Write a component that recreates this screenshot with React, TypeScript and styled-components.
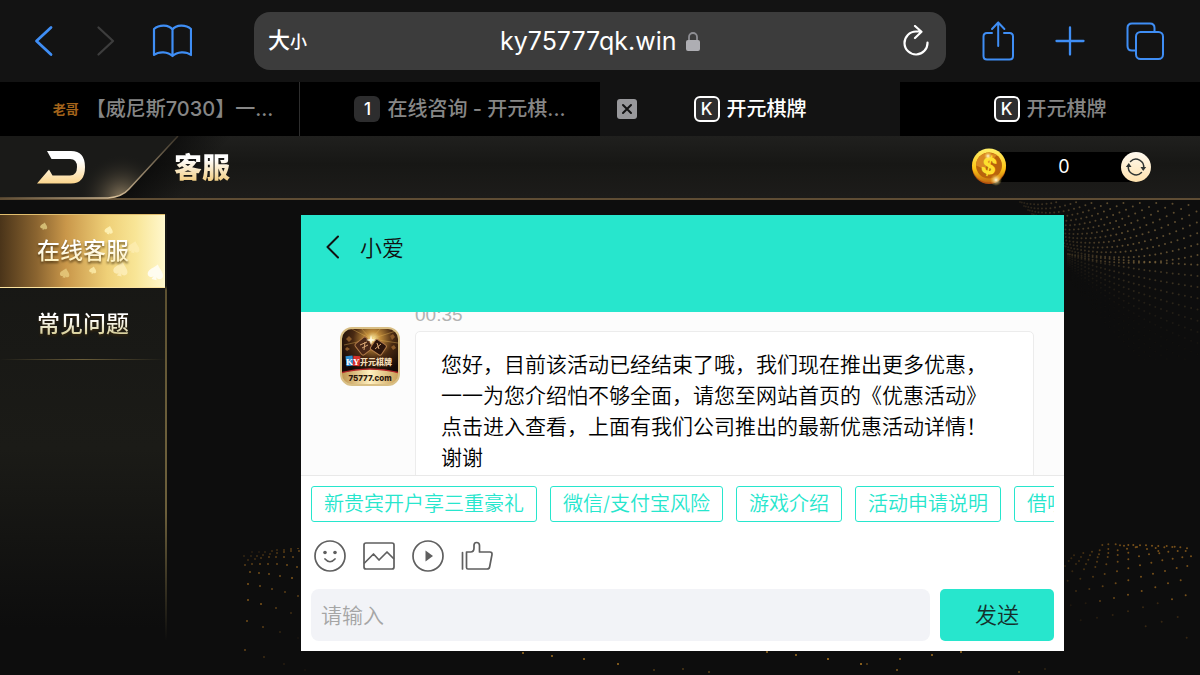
import React from 'react';
import styled, { createGlobalStyle, css } from 'styled-components';

const color = {
  bar: '#131313',
  link: '#3f8ef5',
  field: '#3c3c3c',
  page: '#0d0d0d',
  teal: '#27e6cd',
  line: '#e9e9e9',
};

const GlobalStyle = createGlobalStyle`
  *, *::before, *::after { box-sizing: border-box; }
  body {
    margin: 0;
    background: ${color.page};
    font-family: Inter, "Noto Sans CJK SC", sans-serif;
    color: #fff;
  }
  button, input { font-family: inherit; margin: 0; }
  button { padding: 0; border: 0; background: none; color: inherit; cursor: pointer; }
  svg { display: block; }
`;

const Page = styled.div`
  min-height: 100vh;
  display: flex;
  flex-direction: column;
`;

/* ---------- browser chrome ---------- */

const Toolbar = styled.header`
  display: flex;
  align-items: center;
  height: 82px;
  padding: 0 30px 0 24px;
  background: ${color.bar};
`;

const ToolGroup = styled.nav<{ $gap: number }>`
  display: flex;
  align-items: center;
  gap: ${(p) => p.$gap}px;
`;

const ToolButton = styled.button<{ $wide?: boolean; $dim?: boolean }>`
  display: flex;
  align-items: center;
  justify-content: center;
  width: ${(p) => (p.$wide ? 48 : 40)}px;
  height: 48px;
  color: ${(p) => (p.$dim ? '#3d3d3d' : color.link)};
`;

const AddressBar = styled.div`
  flex: 1;
  display: flex;
  align-items: center;
  justify-content: space-between;
  height: 58px;
  margin: 0 32px 0 58px;
  padding: 0 16px 0 14px;
  border-radius: 16px;
  background: ${color.field};
`;

const TextSizeButton = styled.button`
  width: 60px;
  text-align: left;
  font-size: 22px;
  font-weight: 500;
  line-height: 30px;
  small { font-size: 17px; }
`;

const Address = styled.label`
  display: flex;
  align-items: center;
  gap: 9px;
`;

const AddressInput = styled.input`
  width: 178px;
  padding: 0;
  border: 0;
  outline: 0;
  background: none;
  color: #fff;
  font-size: 25px;
  line-height: 32px;
  text-align: right;
`;

const ReloadButton = styled.button`
  display: flex;
  justify-content: flex-end;
  width: 60px;
`;

const TabStrip = styled.nav`
  display: grid;
  grid-template-columns: repeat(4, 1fr);
  height: 54px;
  background: #000;
`;

const Tab = styled.div<{ $active?: boolean; $divider?: boolean; $long?: boolean }>`
  position: relative;
  display: flex;
  align-items: center;
  justify-content: center;
  padding-left: ${(p) => (p.$long ? 20 : 0)}px;
  border-right: ${(p) => (p.$divider ? '1px solid #2e2e2e' : '0')};
  background: ${(p) => (p.$active ? color.bar : '#000')};
  color: ${(p) => (p.$active ? '#fff' : '#868686')};
`;

const TabLink = styled.a`
  display: flex;
  align-items: center;
  gap: 7px;
  color: inherit;
  text-decoration: none;
  font-size: 20px;
  font-weight: 500;
  line-height: 28px;
  white-space: nowrap;
`;

const LetterIcon = styled.span<{ $framed?: boolean }>`
  display: flex;
  align-items: center;
  justify-content: center;
  width: 26px;
  height: 26px;
  border: ${(p) => (p.$framed ? '2px solid #fff' : '0')};
  border-radius: 6px;
  background: #2d2d2e;
  color: #fff;
  font-size: 17px;
  line-height: 20px;
`;

const GoldIcon = styled.span`
  width: 33px;
  color: #a3631a;
  font-size: 13px;
  font-weight: 700;
  line-height: 16px;
  text-align: right;
`;

const CloseTab = styled.button`
  position: absolute;
  left: 17px;
  top: 17px;
  display: flex;
  align-items: center;
  justify-content: center;
  width: 20px;
  height: 20px;
  border-radius: 3px;
  background: #98989b;
  color: #131313;
`;

/* ---------- game header ---------- */

const GameHeader = styled.header`
  position: relative;
  display: flex;
  align-items: center;
  height: 64px;
  padding: 0 49px 0 36px;
  border-bottom: 2px solid #5f4d34;
  background: linear-gradient(#20201e, #171715 45%, #1d1c1a);
`;

const HeaderShape = styled.svg`
  position: absolute;
  left: 0;
  bottom: -2px;
`;

const ExitButton = styled.button`
  position: relative;
  width: 50px;
`;

const GameTitle = styled.h1`
  position: relative;
  flex: 1;
  margin: 0 0 0 88px;
  padding-top: 2px;
  font-size: 28px;
  font-weight: 900;
  line-height: 36px;
  color: transparent;
  background: linear-gradient(#fff 30%, #f2cf86 85%);
  background-clip: text;
  -webkit-background-clip: text;
`;

const Wallet = styled.div`
  display: flex;
  align-items: center;
`;

const Balance = styled.output`
  width: 138px;
  height: 30px;
  margin: 0 -16px 0 -10px;
  padding-right: 8px;
  background: #000;
  font-size: 18px;
  line-height: 29px;
  text-align: center;
`;

const Coin = styled.svg`
  position: relative;
`;

const RefreshButton = styled.button`
  position: relative;
  display: flex;
  align-items: center;
  justify-content: center;
  width: 30px;
  height: 30px;
  border-radius: 50%;
  background: linear-gradient(#fffaf0, #ffe2ae);
  color: #2f3433;
`;

/* ---------- game body ---------- */

const GameBody = styled.div`
  position: relative;
  flex: 1;
  display: flex;
  align-items: flex-start;
  overflow: hidden;
`;

const Backdrop = styled.svg<{ $corner: 'tr' | 'bl' | 'br' | 'b' }>`
  position: absolute;
  ${(p) => p.$corner === 'tr' && css`top: 0; right: 0;`}
  ${(p) => p.$corner === 'bl' && css`bottom: 0; left: 240px;`}
  ${(p) => p.$corner === 'b' && css`bottom: 0; left: 500px;`}
  ${(p) => p.$corner === 'br' && css`bottom: 0; right: 0;`}
`;

const Sidebar = styled.nav`
  position: relative;
  flex: none;
  width: 167px;
  height: 426px;
  margin-top: 14px;
  border-right: 2px solid;
  border-image: linear-gradient(transparent 17%, #5c5030 18%, #6b5e3a 50%, #6b5e3a 70%, transparent) 1;
  background: linear-gradient(#161614, #1b1b17 55%, ${color.page} 97%);
`;

const SideItem = styled.a<{ $active?: boolean }>`
  position: relative;
  display: flex;
  align-items: center;
  height: ${(p) => (p.$active ? 74 : 72)}px;
  padding-left: 37px;
  border-bottom: 1px solid transparent;
  text-decoration: none;
  ${(p) =>
    p.$active
      ? css`
          border-top: 1px solid #e0bd6e;
          border-bottom-color: #fbe3a0;
          background: linear-gradient(90deg, #4a3419, #8a6430 22%, #c9974a 40%, #efd078 65%, #f8e596 82%, #fff8cd);
        `
      : css`
          border-image: linear-gradient(90deg, transparent, #6b5e3a 50%, transparent) 1;
        `}
`;

const SideText = styled.span<{ $active?: boolean }>`
  position: relative;
  font-size: 23px;
  font-weight: 500;
  line-height: 32px;
  color: transparent;
  background: linear-gradient(#fff 35%, ${(p) => (p.$active ? '#fdf0c0' : '#d9d09c')} 80%);
  background-clip: text;
  -webkit-background-clip: text;
  filter: drop-shadow(0 2px 1px rgba(60, 40, 10, 0.7));
`;

const Spades = styled.svg`
  position: absolute;
  right: 0;
  top: 0;
`;

const Main = styled.main`
  position: relative;
  flex: 1;
  min-width: 0;
  padding: 15px 136px 24px 134px;
`;

/* ---------- chat ---------- */

const Chat = styled.section`
  overflow: hidden;
  background: #fff;
  color: #111;
`;

const ChatHeader = styled.header`
  display: flex;
  align-items: flex-start;
  height: 97px;
  padding: 17px 24px;
  background: ${color.teal};
`;

const BackButton = styled.button`
  display: flex;
  align-items: center;
  width: 35px;
  height: 30px;
`;

const ChatTitle = styled.h2`
  margin: 0;
  font-size: 22px;
  font-weight: 350;
  line-height: 32px;
`;

const Messages = styled.div`
  height: 163px;
  overflow: hidden;
  background: #fcfcfc;
`;

const Message = styled.article`
  display: grid;
  grid-template-columns: 60px 1fr;
  column-gap: 15px;
  margin: -10px 30px 0 39px;
`;

const Time = styled.time`
  grid-column: 2;
  font-family: "Liberation Sans", sans-serif;
  font-size: 19px;
  line-height: 26px;
  color: #b2b2b2;
`;

const Avatar = styled.svg`
  margin-top: -1px;
`;

const Bubble = styled.p`
  margin: 3px 0 0;
  padding: 17px 44px 17px 25px;
  border: 1px solid #ececec;
  border-radius: 5px;
  background: #fff;
  font-size: 21px;
  font-weight: 350;
  line-height: 31px;
  color: #000;
`;

const Composer = styled.form`
  padding: 10px;
  border-top: 1px solid ${color.line};
`;

const QuickReplies = styled.div`
  display: flex;
  gap: 13px;
  overflow: hidden;
`;

const QuickReply = styled.button`
  flex: none;
  height: 36px;
  padding: 0 12px;
  border: 1px solid ${color.teal};
  border-radius: 3px;
  color: ${color.teal};
  font-size: 20px;
  font-weight: 350;
  line-height: 32px;
`;

const Actions = styled.div`
  display: flex;
  gap: 17px;
  padding: 18px 3px 17px;
  color: #5f5f5f;
`;

const InputRow = styled.div`
  display: flex;
  gap: 10px;
  height: 52px;
`;

const MessageInput = styled.input`
  flex: 1;
  min-width: 0;
  padding: 0 10px;
  border: 0;
  border-radius: 8px;
  outline: 0;
  background: #f2f3f7;
  color: #111;
  font-size: 21px;
  font-weight: 350;
  &::placeholder { color: #a5a5a5; opacity: 1; }
`;

const SendButton = styled.button`
  width: 114px;
  padding-bottom: 4px;
  border-radius: 5px;
  background: ${color.teal};
  color: #15302c;
  font-size: 22px;
  font-weight: 350;
`;

/* ---------- drawings ---------- */

type Dot = [number, number, number];

const Dots = ({ dots, fill, r = 1 }: { dots: Dot[]; fill: string; r?: number }) => (
  <>
    {dots.map(([x, y, o], i) => (
      <circle key={i} cx={x} cy={y} r={r} fill={fill} opacity={o} />
    ))}
  </>
);

const waveDots: Dot[] = [];
for (let row = 0; row < 27; row++) {
  const sy = row < 14 ? 2 + row * 4 : 54 + (row - 14) * 2;
  const ey = -96 + row * 11.5;
  const cy = row < 14 ? sy + 18 : 62 + (row - 14) * 8;
  for (let n = 0; n < 30; n++) {
    const t = Math.pow(n / 29, 1.25);
    const sx = 20 + Math.min(row, 12) * 4;
    const x = (1 - t) * (1 - t) * sx + 2 * t * (1 - t) * (sx + 60) + t * t * 204;
    const y = (1 - t) * (1 - t) * sy + 2 * t * (1 - t) * cy + t * t * ey;
    if (y < 1) continue;
    const fade = row < 15 ? 0.7 : Math.max(0.04, 0.5 - (row - 14) * 0.06);
    waveDots.push([x, y, fade * (0.3 + 0.7 * Math.min(1, t * 2))]);
  }
}

const leftDots: Dot[] = [
  [12, 4, 0.2], [19, 4, 0.2], [25, 4, 0.3], [32, 3, 0.4], [37, 2, 0.4], [44, 2, 0.5], [51, 1, 0.6], [58, 0, 0.7],
  [4, 8, 0.3], [11, 8, 0.3], [17, 8, 0.4], [23, 7, 0.4], [30, 6, 0.4], [37, 5, 0.5], [44, 4, 0.6], [51, 3, 0.6], [59, 3, 0.7],
  [8, 12, 0.4], [15, 11, 0.4], [21, 10, 0.5], [29, 9, 0.6], [36, 9, 0.6], [44, 9, 0.7], [53, 9, 0.7],
  [5, 17, 0.6], [12, 16, 0.6], [20, 16, 0.7], [28, 16, 0.7], [37, 16, 0.7], [47, 17, 0.8], [57, 19, 0.8],
  [10, 24, 0.8], [19, 25, 0.8], [29, 26, 0.8], [40, 28, 0.8], [52, 30, 0.9],
  [8, 36, 0.9], [20, 38, 0.8], [32, 41, 0.7], [45, 44, 0.6], [58, 48, 0.6],
  [8, 52, 0.9], [21, 56, 0.9], [36, 60, 0.6], [51, 65, 0.4],
  [7, 73, 0.8], [23, 79, 0.6], [40, 84, 0.3], [58, 90, 0.1],
  [5, 102, 0.7], [24, 109, 0.4], [44, 116, 0.2], [65, 122, 0.1],
];

const bottomDots: Dot[] = [
  [23, 3, 0.9], [52, 6, 0.9], [84, 9, 0.9], [118, 14, 0.9], [154, 20, 0.4], [183, 19, 0.4],
  [209, 22, 0.5], [267, 2, 0.9], [296, 5, 0.9], [328, 9, 1], [361, 14, 1], [367, 14, 0.5],
  [400, 9, 0.8], [432, 5, 0.9], [461, 2, 0.9], [397, 20, 0.7], [519, 22, 0.5], [545, 19, 0.2],
];

const rightDots: Dot[] = [
  [1285, 210], [1300, 210], [1320, 211], [1338, 211], [1356, 212], [1375, 213], [1400, 213], [1424, 215],
  [1272, 212], [1307, 217], [1341, 222], [1367, 219], [1393, 217], [1417, 216], [1441, 217], [1461, 220],
  [1247, 208], [1260, 211], [1281, 221], [1311, 216], [1375, 228], [1405, 230], [1433, 228], [1457, 228],
  [1225, 208], [1225, 222], [1253, 226], [1285, 233], [1317, 244], [1347, 238], [1378, 235],
  [1207, 210], [1225, 234], [1253, 240], [1285, 253], [1320, 271], [1354, 263], [1387, 256], [1418, 251], [1447, 247], [1473, 244],
  [1199, 226], [1197, 238], [1193, 247], [1223, 246], [1253, 260], [1285, 280], [1323, 305], [1359, 296], [1395, 288], [1430, 279], [1462, 273],
  [1176, 230], [1170, 241], [1165, 254], [1191, 260], [1186, 276], [1219, 268], [1251, 289], [1285, 316], [1325, 348], [1366, 337], [1404, 325], [1442, 316],
  [1150, 234], [1143, 246], [1137, 258], [1158, 267], [1152, 283], [1179, 305], [1214, 297], [1247, 325], [1284, 359], [1329, 397], [1373, 385], [1416, 373], [1457, 361],
  [1122, 241], [1114, 250], [1106, 258], [1128, 267], [1117, 289], [1141, 311], [1168, 342], [1208, 334], [1242, 369], [1284, 409], [1385, 440], [1433, 426],
  [1095, 273], [1103, 317], [1128, 348], [1157, 385], [1200, 378], [1238, 420], [1112, 391], [1142, 436], [1191, 428], [1337, 454], [1460, 488],
].map(([x, y]) => [x, y, Math.max(0.12, Math.min(0.85, (x - 1010) / 320)) * (y > 380 ? 0.4 : 1)] as Dot);

const line = (width: number) => ({
  fill: 'none',
  stroke: 'currentColor',
  strokeWidth: width,
  strokeLinecap: 'round' as const,
  strokeLinejoin: 'round' as const,
});

const spade = 'M0-6C2-3 6-1 6 2C6 5 2 5.500 1 3.500L2 6H-2L-1 3.500C-2 5.500-6 5-6 2C-6-1-2-3 0-6Z';

const SpadeSet = () => (
  <Spades width="130" height="72" viewBox="0 0 130 72" aria-hidden="true">
    {[
      [9, 11, 0.6, '#d8c37a', 0.9],
      [74, 15, 0.7, '#fff3b8', 0.9],
      [99, 32, 1, '#fff0bb', 0.6],
      [30, 58, 0.8, '#e8cd80', 0.8],
      [58, 55, 0.6, '#fbe9a5', 0.9],
      [86, 54, 1.2, '#fff2c4', 0.7],
      [121, 57, 1.3, '#fffdf2', 0.95],
    ].map(([x, y, s, f, o], i) => (
      <path key={i} d={spade} transform={`translate(${x} ${y}) rotate(14) scale(${s})`} fill={String(f)} opacity={Number(o)} />
    ))}
  </Spades>
);

const AvatarPicture = () => (
  <Avatar width="60" height="59" viewBox="0 0 60 59" role="img" aria-label="开元棋牌">
    <defs>
      <radialGradient id="glow" cx="55%" cy="20%" r="60%">
        <stop offset="0" stopColor="#fff2a8" />
        <stop offset="0.2" stopColor="#c08c3a" />
        <stop offset="0.55" stopColor="#4a2a12" />
        <stop offset="1" stopColor="#140a06" />
      </radialGradient>
      <linearGradient id="plate" x1="0" x2="1" y1="0" y2="0">
        <stop offset="0" stopColor="#b98d45" />
        <stop offset="0.5" stopColor="#fff0c0" />
        <stop offset="1" stopColor="#c79a50" />
      </linearGradient>
      <clipPath id="round"><rect x="1" y="1" width="58" height="57" rx="11" /></clipPath>
    </defs>
    <g clipPath="url(#round)">
      <rect width="60" height="59" fill="url(#glow)" />
      <path d="M31 12L8 0M31 12L20 0M31 12L42 0M31 12L56 4M31 12L58 16M31 12L4 18" stroke="#e9b95c" strokeWidth="0.8" opacity="0.5" />
      <g stroke="#b17a48" strokeWidth="1">
        <rect x="17" y="12" width="14" height="14" rx="2" transform="rotate(-38 24 19)" fill="#4a2818" />
        <rect x="32" y="14" width="13" height="12" rx="2" transform="rotate(34 38 20)" fill="#2c150c" />
        <path d="M20 18l7-3M22 21l6-3M25 15l-1 8M35 22l6-5M37 16l2 6" stroke="#d9a774" fill="none" />
      </g>
      <path d="M31 8l1 4 4 1-4 1-1 4-1-4-4-1 4-1z" fill="#fffbe2" />
      <path d="M6 12l3-3 3 3-3 3zM50 9l3-2 2 3-3 3zM5 22l2-2 3 2-3 2zM51 20l3-2 2 3-3 2z" fill="#8a5a2a" />
      <rect x="6" y="29" width="7" height="10" fill="#2e8fd0" transform="rotate(-6 9 34)" />
      <rect x="13" y="29" width="7" height="10" fill="#d8322c" transform="rotate(5 16 34)" />
      <text x="6" y="38" fontSize="9" fontWeight="700" fill="#fff" fontFamily="Liberation Serif, serif">KY</text>
      <text x="20" y="38" fontSize="8" fontWeight="900" fill="#f1dcb8" fontFamily="Noto Sans CJK SC, sans-serif">开元棋牌</text>
      <path d="M0 46Q30 38 60 46V59H0Z" fill="url(#plate)" />
      <path d="M0 46Q30 38 60 46" fill="none" stroke="#b3262a" strokeWidth="1.500" />
      <text x="30" y="54" fontSize="8" fontWeight="800" textAnchor="middle" fill="#2a160b" fontFamily="Inter, sans-serif">75777.com</text>
    </g>
    <rect x="1" y="1" width="58" height="57" rx="11" fill="none" stroke="#d9bf85" strokeWidth="2" />
  </Avatar>
);

const CoinPicture = () => (
  <Coin width="38" height="40" viewBox="0 0 38 40" aria-hidden="true">
    <defs>
      <linearGradient id="rim" x1="0" x2="0" y1="0" y2="1">
        <stop offset="0" stopColor="#fff06a" />
        <stop offset="0.6" stopColor="#fdc414" />
        <stop offset="1" stopColor="#c26a10" />
      </linearGradient>
      <radialGradient id="flare">
        <stop offset="0" stopColor="#fffbe0" />
        <stop offset="1" stopColor="#ffd040" stopOpacity="0" />
      </radialGradient>
    </defs>
    <circle cx="18" cy="20" r="17" fill="#b5520c" />
    <circle cx="18" cy="18.500" r="17" fill="url(#rim)" />
    <circle cx="18" cy="18.500" r="13" fill="#b9640c" />
    <path d="M18 5.500A13 13 0 0 0 5 18.500L13 22L26 8Z" fill="#d98a22" />
    <text x="18" y="27" fontSize="23" fontWeight="800" textAnchor="middle" fill="#ffe02e" transform="rotate(14 18 19)" fontFamily="Inter, sans-serif">$</text>
    <circle cx="25" cy="33" r="6" fill="url(#flare)" />
    <circle cx="17" cy="9" r="4" fill="url(#flare)" />
  </Coin>
);

const quickReplies = ['新贵宾开户享三重豪礼', '微信/支付宝风险', '游戏介绍', '活动申请说明', '借呗'];

export default function App() {
  return (
    <Page lang="zh-CN">
      <GlobalStyle />
      <Toolbar>
        <ToolGroup $gap={22}>
          <ToolButton type="button" aria-label="后退">
            <svg width="20" height="32" viewBox="0 0 20 32"><path d="M17 2.500L2.500 16L17 29.500" {...line(2.8)} /></svg>
          </ToolButton>
          <ToolButton type="button" aria-label="前进" $dim>
            <svg width="20" height="32" viewBox="0 0 20 32"><path d="M2.500 2.500L17 16L2.500 29.500" {...line(2.3)} /></svg>
          </ToolButton>
          <ToolButton type="button" aria-label="书签" $wide>
            <svg width="40" height="34" viewBox="0 0 40 34">
              <path d="M20.500 5.500C17 0.500 7 0.500 2 5V31C7 27 16 27.500 20.500 32C25 27.500 34 27 39 31V5C34 0.500 24 0.500 20.500 5.500V31" {...line(2.2)} />
            </svg>
          </ToolButton>
        </ToolGroup>
        <AddressBar>
          <TextSizeButton type="button" aria-label="大小">大<small>小</small></TextSizeButton>
          <Address>
            <AddressInput aria-label="网址" defaultValue="ky75777qk.win" />
            <svg width="14" height="20" viewBox="0 0 14 20" aria-hidden="true">
              <path d="M3 10V6a4 4 0 0 1 8 0v4" fill="none" stroke="#8e8e93" strokeWidth="1.800" />
              <rect y="9" width="14" height="11" rx="2" fill="#aeaeb3" />
            </svg>
          </Address>
          <ReloadButton type="button" aria-label="刷新">
            <svg width="28" height="32" viewBox="0 0 28 32">
              <path d="M25.500 17.500A11.500 11.500 0 1 1 14 6.500H19M13 1L19.500 6.800L13 13" {...line(2.2)} />
            </svg>
          </ReloadButton>
        </AddressBar>
        <ToolGroup $gap={32}>
          <ToolButton type="button" aria-label="分享">
            <svg width="32" height="40" viewBox="0 0 32 40">
              <path d="M10 12H5Q1.500 12 1.500 15.500V35Q1.500 38.500 5 38.500H27.500Q31 38.500 31 35V15.500Q31 12 27.500 12H22M16.200 25V1.500M10 8L16.200 1.500L22.400 8" {...line(2)} />
            </svg>
          </ToolButton>
          <ToolButton type="button" aria-label="新标签页">
            <svg width="30" height="30" viewBox="0 0 30 30"><path d="M15 1.500V28.500M1.500 15H28.500" {...line(2.3)} /></svg>
          </ToolButton>
          <ToolButton type="button" aria-label="所有标签页" $wide>
            <svg width="40" height="38" viewBox="0 0 40 38">
              <rect x="10" y="10" width="27" height="27" rx="4.500" {...line(2)} />
              <path d="M10 28.500H6Q1.500 28.500 1.500 24V6Q1.500 1.500 6 1.500H24Q28.500 1.500 28.500 6V10" {...line(2)} />
            </svg>
          </ToolButton>
        </ToolGroup>
      </Toolbar>

      <TabStrip>
        <Tab $divider $long>
          <TabLink href="#"><GoldIcon>老哥</GoldIcon>【威尼斯7030】一...</TabLink>
        </Tab>
        <Tab $long>
          <TabLink href="#"><LetterIcon>1</LetterIcon>在线咨询 - 开元棋...</TabLink>
        </Tab>
        <Tab $active>
          <CloseTab type="button" aria-label="关闭标签页">
            <svg width="12" height="12" viewBox="0 0 12 12"><path d="M2 2L10 10M10 2L2 10" {...line(2)} /></svg>
          </CloseTab>
          <TabLink href="#"><LetterIcon $framed>K</LetterIcon>开元棋牌</TabLink>
        </Tab>
        <Tab>
          <TabLink href="#"><LetterIcon $framed>K</LetterIcon>开元棋牌</TabLink>
        </Tab>
      </TabStrip>

      <GameHeader>
        <HeaderShape width="230" height="64" viewBox="0 0 230 64" aria-hidden="true">
          <defs>
            <radialGradient id="shine" gradientUnits="userSpaceOnUse" cx="122" cy="62" r="44">
              <stop offset="0" stopColor="#8d7c60" />
              <stop offset="1" stopColor="#1a1a18" stopOpacity="0" />
            </radialGradient>
            <linearGradient id="edge" x1="0" x2="1" y1="0" y2="0">
              <stop offset="0" stopColor="#5f4d34" />
              <stop offset="0.65" stopColor="#d8c09a" />
              <stop offset="1" stopColor="#3a3328" />
            </linearGradient>
            <linearGradient id="shade" gradientUnits="userSpaceOnUse" x1="150" y1="30" x2="182" y2="58">
              <stop offset="0" stopColor="#080808" stopOpacity="0.7" />
              <stop offset="1" stopColor="#080808" stopOpacity="0" />
            </linearGradient>
          </defs>
          <path d="M230 0H178L129 53Q122 61 112 62H230Z" fill="url(#shade)" />
          <path d="M0 62H108Q122 61 129 53L178 0H0Z" fill="#1a1a18" />
          <path d="M0 62H108Q122 61 129 53L178 0H0Z" fill="url(#shine)" />
          <path d="M0 62H108Q122 61 129 53L178 0" fill="none" stroke="url(#edge)" strokeWidth="1.500" />
        </HeaderShape>
        <ExitButton type="button" aria-label="返回">
          <svg width="50" height="34" viewBox="0 0 50 34">
            <defs>
              <linearGradient id="exit" x1="0" x2="0" y1="0" y2="1">
                <stop offset="0.3" stopColor="#ffffff" />
                <stop offset="1" stopColor="#fbd58c" />
              </linearGradient>
            </defs>
            <path d="M11 1H35Q49 1 49 17Q49 33.500 35 33.500H1L13 19.500L16.500 25.500H34Q41 25.500 41 17Q41 9 34 9H15.500Z" fill="url(#exit)" />
          </svg>
        </ExitButton>
        <GameTitle>客服</GameTitle>
        <Wallet>
          <CoinPicture />
          <Balance>0</Balance>
          <RefreshButton type="button" aria-label="刷新余额">
            <svg width="22" height="22" viewBox="0 0 22 22">
              <path d="M3.500 9.500A7.700 7.700 0 0 0 16.500 16.500M18.500 12.500A7.700 7.700 0 0 0 5.500 5.500" {...line(1.5)} />
              <path d="M0.800 11L3.800 7L6.500 11ZM15.500 11L18.200 15L21.200 11Z" fill="currentColor" />
            </svg>
          </RefreshButton>
        </Wallet>
      </GameHeader>

      <GameBody>
        <Backdrop $corner="tr" width="200" height="160" viewBox="0 0 200 160" aria-hidden="true">
          <Dots dots={waveDots} fill="#80683f" />
        </Backdrop>
        <Backdrop $corner="bl" width="70" height="127" viewBox="0 0 70 127" aria-hidden="true">
          <Dots dots={leftDots} fill="#8a5c1c" />
        </Backdrop>
        <Backdrop $corner="b" width="560" height="25" viewBox="0 0 560 25" aria-hidden="true">
          <Dots dots={bottomDots} fill="#b07a22" />
        </Backdrop>
        <Backdrop $corner="br" width="136" height="145" viewBox="1092 165 408 435" aria-hidden="true">
          <Dots dots={rightDots} fill="#8a5c1c" r={3} />
        </Backdrop>

        <Sidebar>
          <SideItem href="#" $active><SpadeSet /><SideText $active>在线客服</SideText></SideItem>
          <SideItem href="#"><SideText>常见问题</SideText></SideItem>
        </Sidebar>

        <Main>
          <Chat>
            <ChatHeader>
              <BackButton type="button" aria-label="返回">
                <svg width="16" height="24" viewBox="0 0 16 24"><path d="M13 1.500L2.500 12L13 22.500" {...line(2)} /></svg>
              </BackButton>
              <ChatTitle>小爱</ChatTitle>
            </ChatHeader>
            <Messages>
              <Message>
                <Time>00:35</Time>
                <AvatarPicture />
                <Bubble>
                  您好，目前该活动已经结束了哦，我们现在推出更多优惠，一一为您介绍怕不够全面，请您至网站首页的《优惠活动》点击进入查看，上面有我们公司推出的最新优惠活动详情！谢谢
                </Bubble>
              </Message>
            </Messages>
            <Composer onSubmit={(e) => e.preventDefault()}>
              <QuickReplies>
                {quickReplies.map((label) => (
                  <QuickReply type="button" key={label}>{label}</QuickReply>
                ))}
              </QuickReplies>
              <Actions>
                <button type="button" aria-label="表情">
                  <svg width="32" height="32" viewBox="0 0 32 32">
                    <circle cx="16" cy="16" r="15" {...line(1.7)} />
                    <circle cx="11" cy="12.500" r="1.800" fill="currentColor" />
                    <circle cx="21" cy="12.500" r="1.800" fill="currentColor" />
                    <path d="M11 19Q16 24.500 21 19" {...line(1.7)} />
                  </svg>
                </button>
                <button type="button" aria-label="图片">
                  <svg width="32" height="32" viewBox="0 0 32 32">
                    <rect x="1" y="3" width="30" height="26" rx="2" {...line(1.7)} />
                    <path d="M1.500 23L10.500 14L16 20L24 12L30.500 18.500" {...line(1.7)} />
                  </svg>
                </button>
                <button type="button" aria-label="视频">
                  <svg width="32" height="32" viewBox="0 0 32 32">
                    <circle cx="16" cy="16" r="15" {...line(1.7)} />
                    <path d="M13.500 10.500V21.500L21 16Z" fill="currentColor" />
                  </svg>
                </button>
                <button type="button" aria-label="评价">
                  <svg width="32" height="32" viewBox="0 0 32 32">
                    <path d="M1.500 12.500V29M5.500 12.500V27.500Q5.500 29 7 29H26Q28.200 29 28.600 27L31 14.500Q31.200 12 29 12H18.500V5.500Q18.500 2.500 15.500 2.500Q13 2.500 13 5.500V8Q13 12 9.500 12H5.500" {...line(1.7)} />
                  </svg>
                </button>
              </Actions>
              <InputRow>
                <MessageInput aria-label="消息" placeholder="请输入" />
                <SendButton type="submit">发送</SendButton>
              </InputRow>
            </Composer>
          </Chat>
        </Main>
      </GameBody>
    </Page>
  );
}
